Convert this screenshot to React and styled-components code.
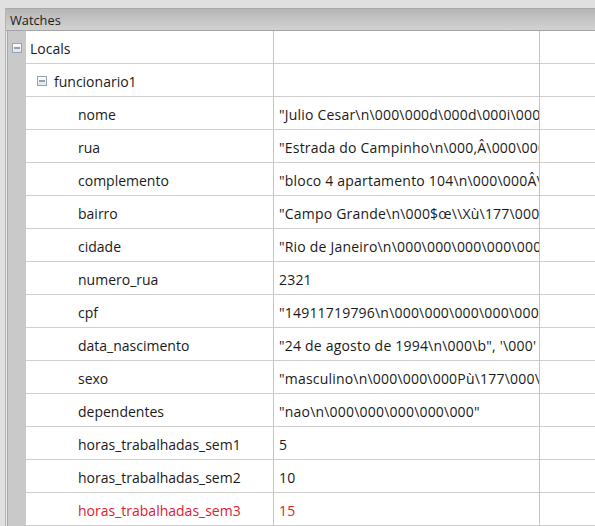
import React from "react";
import styled, { createGlobalStyle } from "styled-components";

const Global = createGlobalStyle`
  html, body { margin: 0; padding: 0; }
  body {
    background: #e0e0e0;
    font-family: "Open Sans", "Noto Sans", sans-serif;
    width: 595px;
    height: 526px;
    overflow: hidden;
  }
`;

const Window = styled.div`
  margin: 8px 0 0 5px;
  border-left: 1px solid #b4b4b4;
  height: 518px;
  display: flex;
  flex-direction: column;
`;

const Header = styled.div`
  height: 21px;
  border-top: 1px solid #a8a8a8;
  border-bottom: 1px solid #a4a4a4;
  background: linear-gradient(#b6b6b6, #c4c4c4 50%, #d2d2d2);
  display: flex;
  align-items: center;
  padding-left: 4px;
  font-size: 12.8px;
  color: #1c1c1c;
`;

const Body = styled.div`
  flex: 1;
  display: flex;
  background: #eaeaea;
  padding-left: 1px;
`;

const Table = styled.div`
  flex: 1;
  border-left: 1px solid #a8a8a8;
  display: flex;
  flex-direction: column;
  background: #fff;
`;

const Row = styled.div`
  display: grid;
  grid-template-columns: 18px 248px 266px 1fr;
  height: 33px;
  flex: none;
`;

const Gutter = styled.div`
  background: #c9c9c9;
  display: flex;
  align-items: center;
  padding: 1px 0 0 4px;
`;

const Cell = styled.div`
  display: flex;
  align-items: center;
  border-bottom: 1px solid #cfcfcf;
  border-right: ${(p) => (p.$last ? "none" : "1px solid #c4c4c4")};
  overflow: hidden;
  white-space: nowrap;
  font-size: 14px;
  letter-spacing: ${(p) => (p.$value ? "0.2px" : "0")};
  color: ${(p) => (p.$changed ? "#e0202e" : "#1a1a1a")};
  padding: 2px 0 0 ${(p) => p.$indent || 0}px;
  box-sizing: border-box;
`;

const Label = styled.span`
  margin-left: ${(p) => p.$gap || 0}px;
`;

const Minus = () => (
  <svg width="10" height="10" viewBox="0 0 10 10">
    <defs>
      <linearGradient id="mg" x1="0" y1="0" x2="0" y2="1">
        <stop offset="0" stopColor="#ffffff" />
        <stop offset="1" stopColor="#dfe3ea" />
      </linearGradient>
    </defs>
    <rect x="0.5" y="0.5" width="9" height="9" fill="url(#mg)" stroke="#9aa3b2" />
    <rect x="2" y="4.5" width="6" height="1" fill="#3f4e66" />
  </svg>
);

const children = [
  ["nome", '"Julio Cesar\\n\\000\\000d\\000d\\000i\\000\\000\\000\\000'],
  ["rua", '"Estrada do Campinho\\n\\000,Â\\000\\000\\000\\000'],
  ["complemento", '"bloco 4 apartamento 104\\n\\000\\000Â\\\\000\\000'],
  ["bairro", '"Campo Grande\\n\\000$œ\\\\Xù\\177\\000\\000\\000'],
  ["cidade", '"Rio de Janeiro\\n\\000\\000\\000\\000\\000\\000\\000'],
  ["numero_rua", "2321"],
  ["cpf", '"14911719796\\n\\000\\000\\000\\000\\000\\000\\000'],
  ["data_nascimento", '"24 de agosto de 1994\\n\\000\\b", \'\\000\' <repeats'],
  ["sexo", '"masculino\\n\\000\\000\\000Pù\\177\\000\\000\\000'],
  ["dependentes", '"nao\\n\\000\\000\\000\\000\\000"'],
  ["horas_trabalhadas_sem1", "5"],
  ["horas_trabalhadas_sem2", "10"],
  ["horas_trabalhadas_sem3", "15", true],
];

export default function App() {
  return (
    <>
      <Global />
      <Window>
        <Header>Watches</Header>
        <Body>
          <Table>
            <Row>
              <Gutter>
                <Minus />
              </Gutter>
              <Cell $indent={4}>Locals</Cell>
              <Cell />
              <Cell $last />
            </Row>
            <Row>
              <Gutter />
              <Cell $indent={11}>
                <Minus />
                <Label $gap={7}>funcionario1</Label>
              </Cell>
              <Cell />
              <Cell $last />
            </Row>
            {children.map(([name, value, changed]) => (
              <Row key={name}>
                <Gutter />
                <Cell $indent={52} $changed={changed}>
                  {name}
                </Cell>
                <Cell $indent={5} $value $changed={changed}>
                  {value}
                </Cell>
                <Cell $last />
              </Row>
            ))}
          </Table>
        </Body>
      </Window>
    </>
  );
}
